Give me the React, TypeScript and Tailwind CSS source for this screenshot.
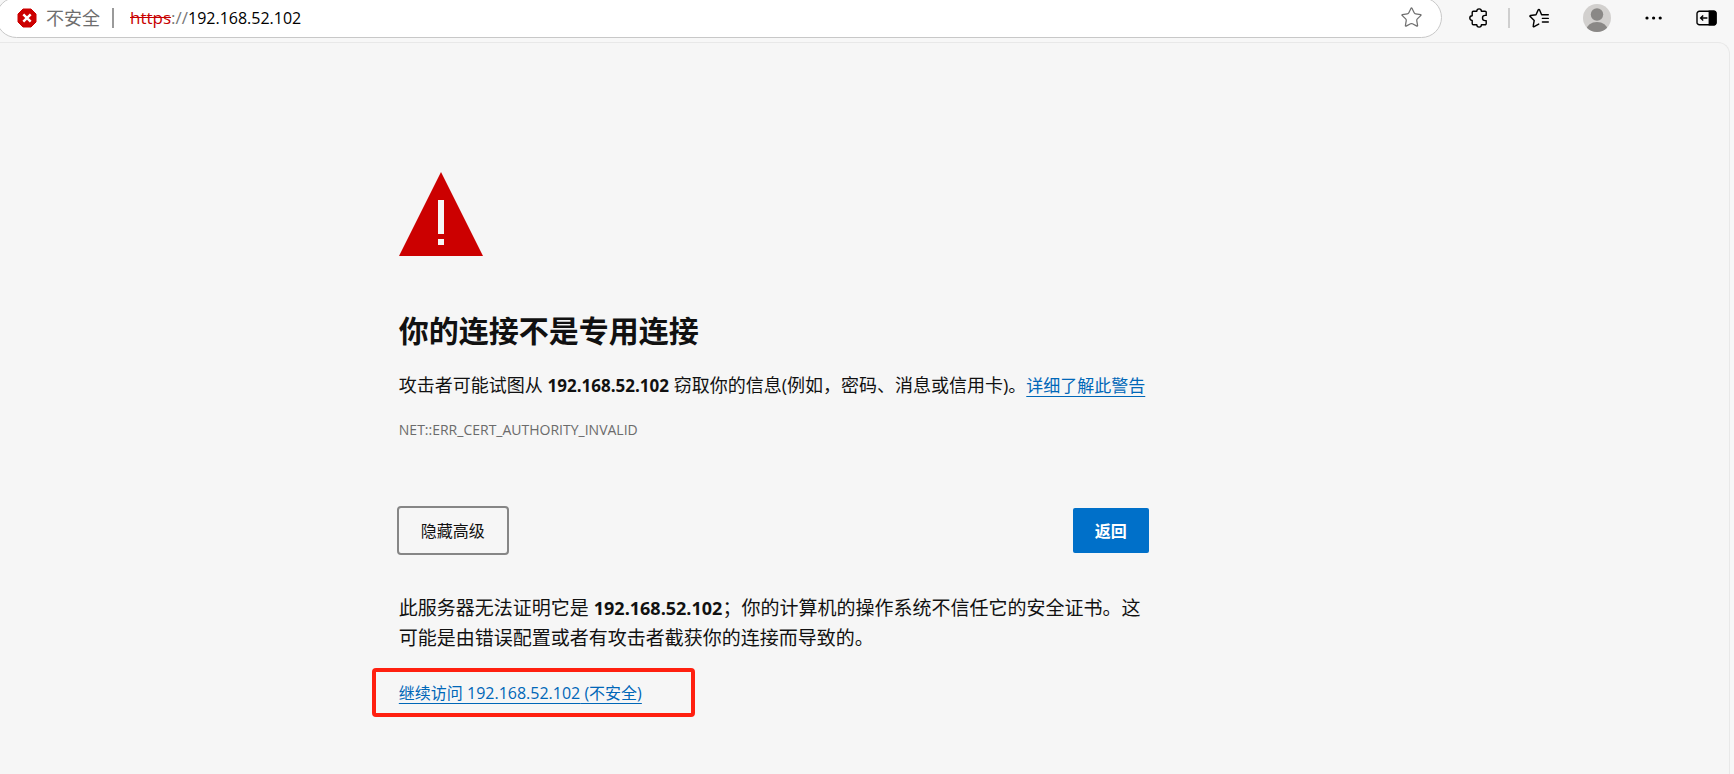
import { Star } from "lucide-react";

const host = "192.168.52.102";

function NotSecureIcon() {
  return (
    <svg className="size-5 shrink-0" viewBox="0 0 20 20" aria-hidden="true">
      <path d="M6 1h8l5 5v8l-5 5H6l-5-5V6Z" fill="#cc0000" stroke="#cc0000" strokeLinejoin="round" />
      <path d="m6.3 6.3 7.4 7.4M13.7 6.3l-7.4 7.4" stroke="#fff" strokeWidth="2.4" />
    </svg>
  );
}

function ExtensionsIcon() {
  return (
    <svg className="size-5" viewBox="0 0 20 20" fill="none" stroke="currentColor" strokeWidth="1.4" strokeLinejoin="round" aria-hidden="true">
      <path d="M4.4 3.2h3.4a2.3 2.3 0 0 1 4.6 0h3.6a1.2 1.2 0 0 1 1.2 1.2v3h-1.1a2.6 2.6 0 0 0 0 5.2h1.1v3a1.2 1.2 0 0 1-1.2 1.2h-3.6a2.3 2.3 0 0 1-4.6 0H4.4a1.2 1.2 0 0 1-1.2-1.2v-3.1a2.4 2.4 0 0 1 0-4.8V4.4a1.2 1.2 0 0 1 1.2-1.2Z" />
    </svg>
  );
}

function FavoritesIcon() {
  return (
    <svg className="size-5" viewBox="0 0 20 20" fill="none" stroke="currentColor" strokeWidth="1.4" strokeLinejoin="round" strokeLinecap="round" aria-hidden="true">
      <path d="M19.3 6.8H12.6l-2-4.9a.8.8 0 0 0-1.4 0L7 6.7l-5.4.8a.6.6 0 0 0-.4 1.1l4 3.9-1 5.4a.6.6 0 0 0 .9.7l4.6-2.5" />
      <path d="M13.4 10.4h5.9M13.4 14h5.9" />
    </svg>
  );
}

function Avatar() {
  return (
    <svg className="size-7" viewBox="0 0 28 28" aria-hidden="true">
      <clipPath id="avatar">
        <circle cx="14" cy="14" r="14" />
      </clipPath>
      <g clipPath="url(#avatar)">
        <path d="M0 0h28v28H0Z" fill="#d2d0ce" />
        <circle cx="14" cy="10.5" r="6.2" fill="#8a8886" />
        <ellipse cx="14" cy="26" rx="10.5" ry="8" fill="#8a8886" />
      </g>
    </svg>
  );
}

function SidebarIcon() {
  return (
    <svg className="h-4 w-[21px]" viewBox="0 0 21 16" aria-hidden="true">
      <rect x="1" y="1.2" width="19" height="13.6" rx="2.4" fill="none" stroke="#000" strokeWidth="1.4" />
      <path d="M12.6 .6H18A2.6 2.6 0 0 1 20.6 3v10a2.6 2.6 0 0 1-2.6 2.4h-5.4Z" />
      <path d="M11.4 8H4.8M7.2 5.4 4.6 8l2.6 2.6" fill="none" stroke="#000" strokeWidth="1.4" />
    </svg>
  );
}

function Toolbar() {
  return (
    <header className="flex h-[42px] items-start bg-[#f7f7f7] text-black">
      <div className="-mt-[3px] -ml-1 flex h-[41px] flex-1 items-center rounded-full border border-[#c8c8c8] bg-white pr-[18px] pl-5">
        <button className="flex items-center text-lg leading-5 text-[#6e6e6e]">
          <NotSecureIcon />
          <span className="ml-[9px]">不安全</span>
        </button>
        <span className="ml-[12px] h-5 w-0.5 bg-[#9a9a9a]" />
        <p className="ml-4 flex-1 text-base leading-5">
          <span className="text-[17px] text-[#c80000] line-through">https</span>
          <span className="text-[17px] text-[#767676]">://</span>
          {host}
        </p>
        <button aria-label="收藏此页" className="text-[#707070]">
          <Star size={23} strokeWidth={1.3} />
        </button>
      </div>
      <nav className="flex h-9 items-center pr-[17px] pl-[27px]">
        <button aria-label="扩展"><ExtensionsIcon /></button>
        <span className="mx-[19px] h-5 w-0.5 bg-[#cfcfcf]" />
        <button aria-label="收藏夹"><FavoritesIcon /></button>
        <button aria-label="个人资料" className="mx-[34px]"><Avatar /></button>
        <button aria-label="设置及其他">
          <svg className="h-5 w-[18px]" viewBox="0 0 18 20" aria-hidden="true">
            <circle cx="2" cy="10" r="1.6" />
            <circle cx="8.6" cy="10" r="1.6" />
            <circle cx="15.2" cy="10" r="1.6" />
          </svg>
        </button>
        <button aria-label="侧栏" className="ml-[33px]"><SidebarIcon /></button>
      </nav>
    </header>
  );
}

export default function App() {
  return (
    <div lang="zh-CN" className="flex min-h-screen flex-col overflow-hidden bg-[#f7f7f7] font-['Open_Sans','Noto_Sans_CJK_SC',sans-serif] text-[#111]">
      <Toolbar />
      <main className="mr-1 flex-1 rounded-tr-xl border-t border-r border-[#e8e8e8] bg-[#f6f6f6] pt-[129px] pl-[23%]">
        <div className="max-w-[750px]">
          <svg className="size-[84px]" viewBox="0 0 84 84" aria-hidden="true">
            <path d="M42 0 84 84H0Z" fill="#cc0000" />
            <path d="M39 28h6v34h-6ZM39 67h6v6h-6Z" fill="#f6f6f6" />
          </svg>
          <h1 className="mt-[55px] text-[30px] leading-10 font-bold">你的连接不是专用连接</h1>
          <p className="mt-5 text-lg leading-7 whitespace-nowrap">
            攻击者可能试图从 <strong className="text-[17px]">{host}</strong> 窃取你的信息(例如，密码、消息或信用卡)。
            <a href="#learn-more" className="text-[17px] text-[#0067b8] underline decoration-1 underline-offset-4">详细了解此警告</a>
          </p>
          <p className="mt-[18px] text-sm leading-6 text-[#6b6b6b]">NET::ERR_CERT_AUTHORITY_INVALID</p>

          <div className="mt-[66px] flex justify-between">
            <button className="h-[45px] rounded-xs px-[22px] text-base outline-2 outline-[#868686]">隐藏高级</button>
            <button className="h-[45px] rounded-xs bg-[#0070c9] px-[22px] text-base font-bold text-white">返回</button>
          </div>

          <p className="mt-10 text-[19px] leading-[30px]">
            此服务器无法证明它是 <strong className="text-lg leading-5">{host}</strong>；你的计算机的操作系统不信任它的安全证书。这可能是由错误配置或者有攻击者截获你的连接而导致的。
          </p>

          <div className="mt-[15px] -ml-[27px] flex h-[49px] w-[323px] items-center rounded-sm border-4 border-[#ff2010] pl-[23px]">
            <a href="#proceed" className="text-base text-[#0067b8] underline decoration-1 underline-offset-4">
              继续访问 {host} (不安全)
            </a>
          </div>
        </div>
      </main>
    </div>
  );
}
